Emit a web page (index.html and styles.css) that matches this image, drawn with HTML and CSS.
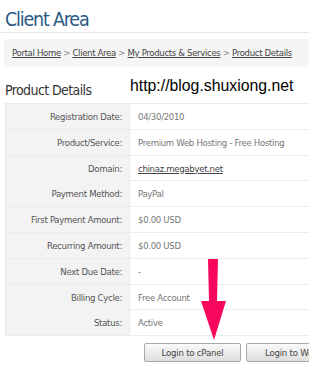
FILE: index.html
```html
<!DOCTYPE html>
<html>
<head>
<meta charset="utf-8">
<link rel="stylesheet" href="styles.css">
</head>
<body>
<div class="page">
  <h1 class="title">Client Area</h1>
  <div class="crumbs">
    <a href="#">Portal Home</a> &gt; <a href="#">Client Area</a> &gt; <a href="#">My Products &amp; Services</a> &gt; <a href="#">Product Details</a>
  </div>
  <div class="head-row">
    <h2 class="subtitle">Product Details</h2>
  </div>
  <div class="details">
    <div class="row"><div class="lbl">Registration Date:</div><div class="val">04/30/2010</div></div>
    <div class="row"><div class="lbl">Product/Service:</div><div class="val">Premium Web Hosting - Free Hosting</div></div>
    <div class="row"><div class="lbl">Domain:</div><div class="val"><a href="#">chinaz.megabyet.net</a></div></div>
    <div class="row"><div class="lbl">Payment Method:</div><div class="val">PayPal</div></div>
    <div class="row"><div class="lbl">First Payment Amount:</div><div class="val">$0.00 USD</div></div>
    <div class="row"><div class="lbl">Recurring Amount:</div><div class="val">$0.00 USD</div></div>
    <div class="row"><div class="lbl">Next Due Date:</div><div class="val">-</div></div>
    <div class="row"><div class="lbl">Billing Cycle:</div><div class="val">Free Account</div></div>
    <div class="row"><div class="lbl">Status:</div><div class="val">Active</div></div>
  </div>
  <div class="buttons">
    <button class="btn btn-cpanel">Login to cPanel</button>
    <button class="btn btn-webmail">Login to Webmail</button>
  </div>
  <div class="watermark">http://blog.shuxiong.net</div>
  <svg class="arrow" width="30" height="84" viewBox="0 0 30 84">
    <polygon points="9,0 19,0 18,42 27,42 15,81 2,42 10,42" fill="#f7085c"/>
  </svg>
</div>
</body>
</html>
```
FILE: styles.css
```css
html, body {
  margin: 0;
  padding: 0;
  background: #fff;
  overflow: hidden;
}
.page {
  position: relative;
  width: 309px;
  height: 370px;
  overflow: hidden;
  font-family: "DejaVu Sans Condensed", "DejaVu Sans", sans-serif;
}
.title {
  margin: 0;
  padding: 9px 0 2px 5px;
  font-size: 19.5px;
  letter-spacing: -1.2px;
  font-weight: normal;
  color: #2a5983;
  line-height: 21px;
  border-bottom: 1px solid #e6e6e6;
}
.crumbs {
  margin: 6px 0 0 4px;
  height: 28px;
  line-height: 28px;
  padding-left: 8px;
  background: #f5f5f5;
  font-size: 9.5px;
  letter-spacing: -0.33px;
  color: #888;
  white-space: nowrap;
}
.crumbs a {
  color: #444;
  text-decoration: underline;
}
.head-row {
  height: 36px;
}
.subtitle {
  margin: 0;
  padding: 14px 0 0 5px;
  font-size: 14px;
  letter-spacing: -0.6px;
  font-weight: normal;
  color: #333;
  line-height: 18px;
}
.details {
  margin-left: 5px;
  width: 420px;
  border-top: 1px solid #ebebeb;
  border-left: 1px solid #ebebeb;
}
.row {
  display: grid;
  grid-template-columns: 124px 1fr;
  height: 25.8px;
  box-sizing: border-box;
  border-bottom: 1px solid #ececec;
  font-size: 9.5px;
  letter-spacing: -0.3px;
}
.lbl {
  background: #f3f3f3;
  text-align: right;
  padding-right: 7px;
  color: #555;
  line-height: 25px;
  border-right: 1px solid #e8e8e8;
}
.val {
  padding-left: 8px;
  color: #777;
  line-height: 25px;
}
.val a {
  color: #444;
}
.buttons {
  display: flex;
  gap: 5px;
  margin: 7px 0 0 144px;
  white-space: nowrap;
}
.btn {
  flex: none;
  height: 19px;
  padding: 0 14px;
  font-family: inherit;
  font-size: 9.5px;
  letter-spacing: -0.2px;
  color: #444;
  border: 1px solid #a9a9a9;
  border-radius: 2px;
  background: linear-gradient(#fafafa, #dedede);
  line-height: 17px;
}
.btn-cpanel {
  width: 97px;
}
.btn-webmail {
  padding: 0 18px;
}
.watermark {
  position: absolute;
  left: 130px;
  top: 77px;
  font-family: "Liberation Sans", Arial, sans-serif;
  font-size: 15.8px;
  color: #000;
}
.arrow {
  position: absolute;
  left: 199px;
  top: 259px;
}
```
